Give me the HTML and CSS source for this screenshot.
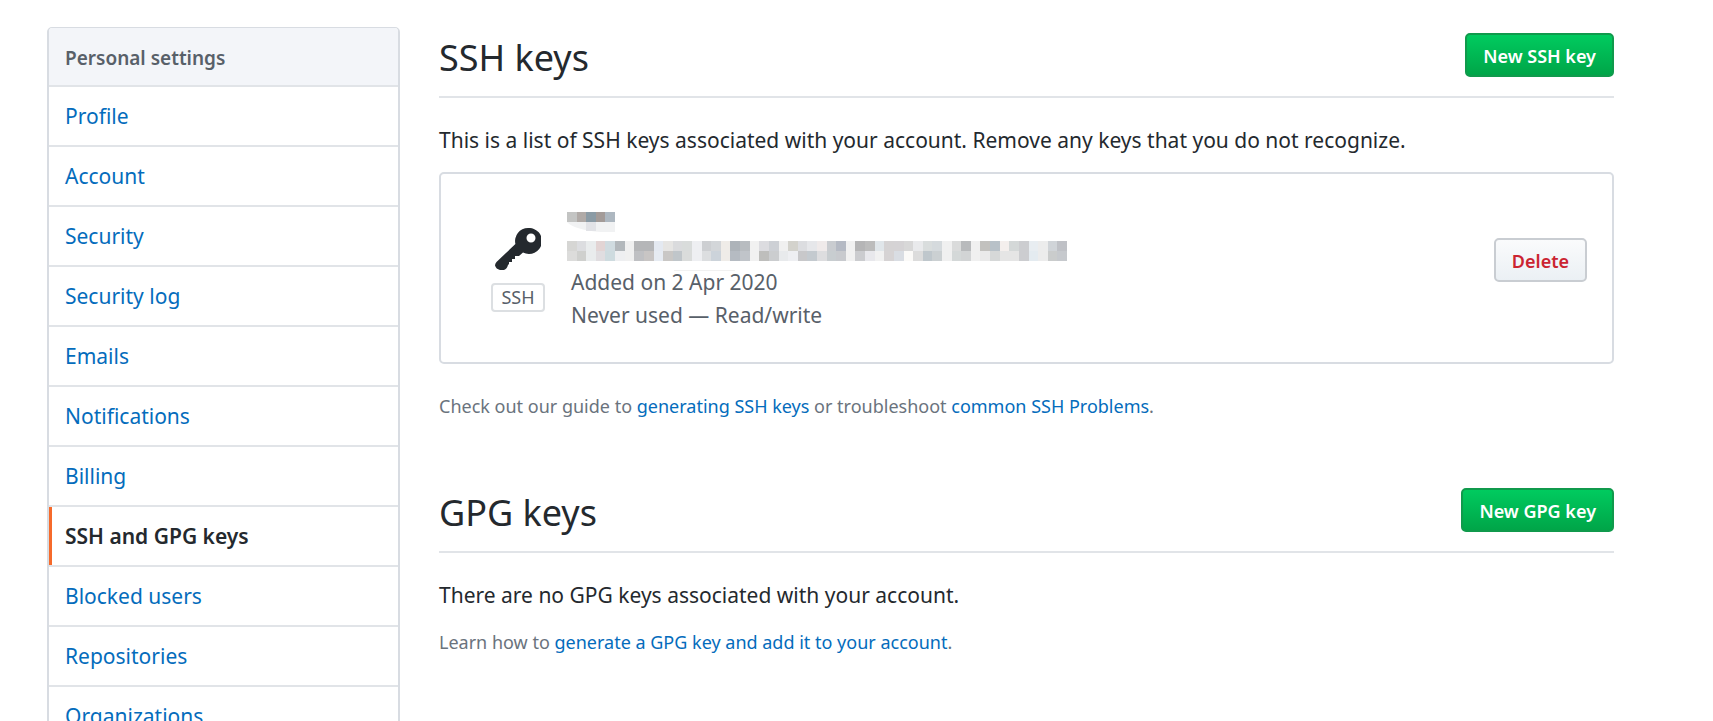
FILE: index.html
```html
<!DOCTYPE html>
<html lang="en">
<head>
<meta charset="utf-8">
<meta name="viewport" content="width=device-width, initial-scale=1">
<title>SSH and GPG keys</title>
<link rel="stylesheet" href="styles.css">
</head>
<body>
<div class="page">
  <nav class="menu" aria-label="Personal settings">
    <h2 class="menu-heading">Personal settings</h2>
    <a class="menu-item" href="#">Profile</a>
    <a class="menu-item" href="#">Account</a>
    <a class="menu-item" href="#">Security</a>
    <a class="menu-item" href="#">Security log</a>
    <a class="menu-item" href="#">Emails</a>
    <a class="menu-item" href="#">Notifications</a>
    <a class="menu-item" href="#">Billing</a>
    <a class="menu-item selected" href="#" aria-current="page">SSH and GPG keys</a>
    <a class="menu-item" href="#">Blocked users</a>
    <a class="menu-item" href="#">Repositories</a>
    <a class="menu-item" href="#">Organizations</a>
  </nav>
  <main class="content">
    <section class="section">
      <header class="subhead">
        <h1 class="title">SSH keys</h1>
        <button class="btn btn-primary" type="button">New SSH key</button>
      </header>
      <p class="lead">This is a list of SSH keys associated with your account. Remove any keys that you do not recognize.</p>
      <div class="key-card">
        <div class="key-type">
          <svg class="key-icon" viewBox="0 0 46 42" aria-hidden="true">
            <path fill="#24292e" fill-rule="evenodd" d="M33 0a13 13 0 0 0-12.600 16L1.500 34Q0 35.500 0 37.500Q1 41 5 42h4q3-1 4-5l1-1v-2h3v-3h3v-3h4l4-3.500A13 13 0 1 0 33 0zM36 5.500a4.500 4.500 0 1 1 0 9a4.500 4.500 0 0 1 0-9z"/>
          </svg>
          <span class="badge">SSH</span>
        </div>
        <div class="key-info">
          <svg class="redacted" viewBox="0 0 500 54" aria-hidden="true">
            <path fill="#f1f2f3" d="M0 10h48v10H34Q8 18 0 10z"/>
            <path fill="#e2e3e7" d="M19 10h10v9H19z"/>
            <path fill="#f1f1f1" d="M107 58h61v1h-61z"/>
          </svg>
          <span class="key-line">Added on 2 Apr 2020</span>
          <span class="key-line">Never used — Read/write</span>
        </div>
        <button class="btn btn-danger" type="button">Delete</button>
      </div>
      <p class="note">Check out our guide to <a href="#">generating SSH keys</a> or troubleshoot <a href="#">common SSH Problems</a>.</p>
    </section>
    <section class="section">
      <header class="subhead">
        <h1 class="title">GPG keys</h1>
        <button class="btn btn-primary" type="button">New GPG key</button>
      </header>
      <p class="lead">There are no GPG keys associated with your account.</p>
      <p class="note">Learn how to <a href="#">generate a GPG key and add it to your account</a>.</p>
    </section>
  </main>
</div>
<script src="mosaic.js"></script>
</body>
</html>
```
FILE: mosaic.js
```js
// Fills the redacted key name and fingerprint with rows of coloured blocks.
const cell = 500 / 52;
const rows = [
  { y: 0, colors: "c3c4c3 b0aaa7 8b9ba5 a39b98 adb7c0" },
  { y: 29, colors: "d6d6d4 dcdde0 e9eced e2d4d4 d0dbe0 b3b8bc f0f0f0 b5b6b8 b5b6b8 e4e9f1 e6e5e3 dadbdd d9dcdb eeeff2 cdcfd2 d3d6d9 efece8 adb3b9 b8bcc0 f1f1f1 dcdce0 cdd0d5 f0f0f0 d3d2cc dcdde0 e6e7ea efeaea c9ccd0 b5bac4 f1f1f1 b5b5b6 bcbcbc e0e6ea d5d3d4 d5d3d5 d8d8d8 e9eaec d9dddd d5dadd f0f0f0 dadbdb b8babc f0f0f0 c2c1be b8c1c8 f4efed d4d8d8 cccdd0 e8edf1 ececec d0d4d8 bfc1c6" },
  { y: 39, colors: "dcdcdb cfd0ce e9eced e0dde0 cedbdf eeeff1 f0f0f0 bfc0c3 c8c5c4 e6ebf2 c9c7c5 c0c6ca dadcdb eeeff2 dcdee0 ccd3da efece8 b5bbc2 c0c4c9 f1f1f1 bebebc cbcdcf e8eaec eeeff2 c8c8ca c4cacf dddddf c8cdd0 c8cace f1f1f1 cbcccf e8e8ec f1f1f1 d6d3d4 d9dde3 fbfaf8 dcdcdc bfc7cc cbd0d2 f0f0f0 d4d8d8 d2d4d5 f0f0f0 eaeaea d6d8d8 e5e5e5 e5e5e5 cccdd0 e4ebf0 ececec cacccc c6c9cd" }
];
const svg = document.querySelector(".redacted");
for (const row of rows) {
  row.colors.split(" ").forEach((color, i) => {
    const rect = document.createElementNS("http://www.w3.org/2000/svg", "rect");
    const x = Math.round(i * cell);
    rect.setAttribute("x", x);
    rect.setAttribute("y", row.y);
    rect.setAttribute("width", Math.round((i + 1) * cell) - x);
    rect.setAttribute("height", 10);
    rect.setAttribute("fill", "#" + color);
    svg.append(rect);
  });
}
```
FILE: styles.css
```css
* { box-sizing: border-box; }
body {
  margin: 0;
  background: #fff;
  color: #24292e;
  font: 21px/33px "Noto Sans", "Open Sans", sans-serif;
}
a { color: #046cbc; text-decoration: none; }
.page { display: flex; align-items: flex-start; gap: 39px; padding: 27px 99px 0 47px; }
.menu { flex: 0 0 353px; border: 2px solid #d8dce2; border-top-width: 1px; border-radius: 5px; overflow: hidden; }
.menu-heading, .menu-item {
  display: block;
  margin: 0;
  padding: 13px 16px;
  border-bottom: 2px solid #e1e4e8;
  line-height: 32px;
}
.menu-heading { padding: 14px 16px 11px; background: #f3f5f9; color: #586069; font-size: 19px; font-weight: 600; }
.menu-item.selected { color: #24292e; font-weight: 600; box-shadow: inset 3px 0 #f66a2b; }
.content { flex: 1; min-width: 0; }
.subhead { display: flex; justify-content: space-between; align-items: center; border-bottom: 2px solid #e1e4e8; height: 71px; padding-bottom: 13px; }
.title { margin: 0; padding-top: 6px; font-size: 36px; line-height: 46px; font-weight: 400; }
.lead { margin: 26px 0 0; }
.btn { font: 600 18px/24px "Noto Sans", "Open Sans", sans-serif; padding: 9px 16px 7px; border: 2px solid; border-radius: 5px; }
.btn-primary { color: #fff; border-color: #109a4c; background: linear-gradient(#00cb5f, #00a548); }
.btn-danger { margin-top: 26px; color: #cb2431; border-color: #c9cdd2; background: linear-gradient(#fafbfc, #ebf0f4); }
.key-card { display: flex; align-items: flex-start; margin-top: 15px; padding: 38px 25px 30px 50px; border: 2px solid #d8dce2; border-radius: 5px; }
.key-type { display: flex; flex-direction: column; align-items: center; gap: 13px; width: 54px; padding-top: 16px; }
.key-icon { width: 46px; height: 42px; }
.badge { padding: 0 8px; border: 2px solid #dcdfe2; border-radius: 4px; color: #586069; font-size: 18px; line-height: 25px; }
.key-info { display: flex; flex-direction: column; flex: 1; margin-left: 22px; color: #586069; }
.key-line { padding-left: 4px; }
.redacted { width: 500px; height: 54px; overflow: visible; }
.note { margin: 27px 0 0; color: #6a737d; font-size: 18px; line-height: 30px; }
.lead + .note { margin-top: 15px; }
.section + .section { margin-top: 61px; }
```
